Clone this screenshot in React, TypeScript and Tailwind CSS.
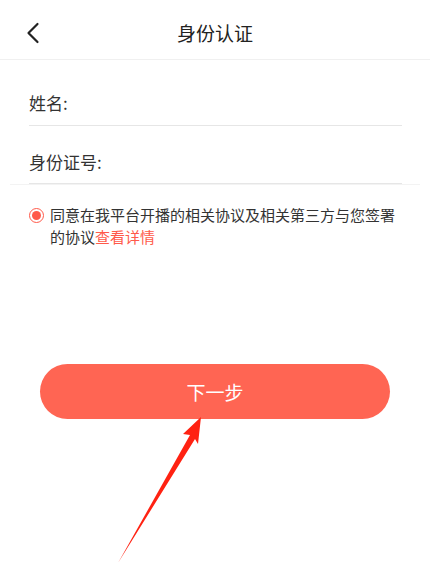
import React from "react";

export default function App() {
  return (
    <div
      className="relative w-[430px] h-[568px] bg-white overflow-hidden"
      style={{ fontFamily: '"Noto Sans CJK SC", "Noto Sans", sans-serif' }}
    >
      {/* Header */}
      <div className="relative flex items-center justify-center h-[60px] border-b border-[#f0f0f0]">
        <svg
          className="absolute left-[25px] top-[22px]"
          width="16"
          height="22"
          viewBox="0 0 16 22"
          fill="none"
        >
          <path d="M12.5 2 L3.5 11 L12.5 20" stroke="#222" strokeWidth="2.2" strokeLinecap="round" strokeLinejoin="round" />
        </svg>
        <span className="text-[19px] leading-[26px] text-[#222] mt-[6px]">身份认证</span>
      </div>

      {/* Form */}
      <div className="px-[29px] pr-[28px]">
        <div className="pt-[31px] pb-[10px] border-b border-[#e6e6e6]">
          <span className="text-[17px] leading-[24px] text-[#333]">姓名:</span>
        </div>
        <div className="pt-[24px] pb-[9px] border-b border-[#e6e6e6]">
          <span className="text-[17px] leading-[24px] text-[#333]">身份证号:</span>
        </div>
      </div>
      <div className="mx-[10px] border-b border-[#f3f3f3]"></div>

      {/* Agreement */}
      <div className="flex items-start mt-[19px] pl-[29px]">
        <div className="mt-[4px] w-[15px] h-[15px] rounded-full border-[1.5px] border-[#ff5a4a] flex items-center justify-center shrink-0">
          <div className="w-[9px] h-[9px] rounded-full bg-[#ff5a4a]"></div>
        </div>
        <div className="ml-[6px] flex flex-col text-[15px] leading-[22px] text-[#333]">
          <span>同意在我平台开播的相关协议及相关第三方与您签署</span>
          <div className="flex">
            <span>的协议</span>
            <span className="text-[#ff5a4a]">查看详情</span>
          </div>
        </div>
      </div>

      {/* Button */}
      <div className="mt-[116px] px-[40px]">
        <button className="w-[350px] h-[55px] rounded-full bg-[#ff6553] flex items-center justify-center">
          <span className="text-[19px] leading-[26px] text-white">下一步</span>
        </button>
      </div>

      {/* Annotation arrow */}
      <svg
        className="absolute left-0 top-0 pointer-events-none"
        width="430"
        height="568"
        viewBox="0 0 430 568"
      >
        <polygon
          points="201,417 183,434 190,435 118,563 195,439 198,444"
          fill="#ff2212"
        />
      </svg>
    </div>
  );
}
